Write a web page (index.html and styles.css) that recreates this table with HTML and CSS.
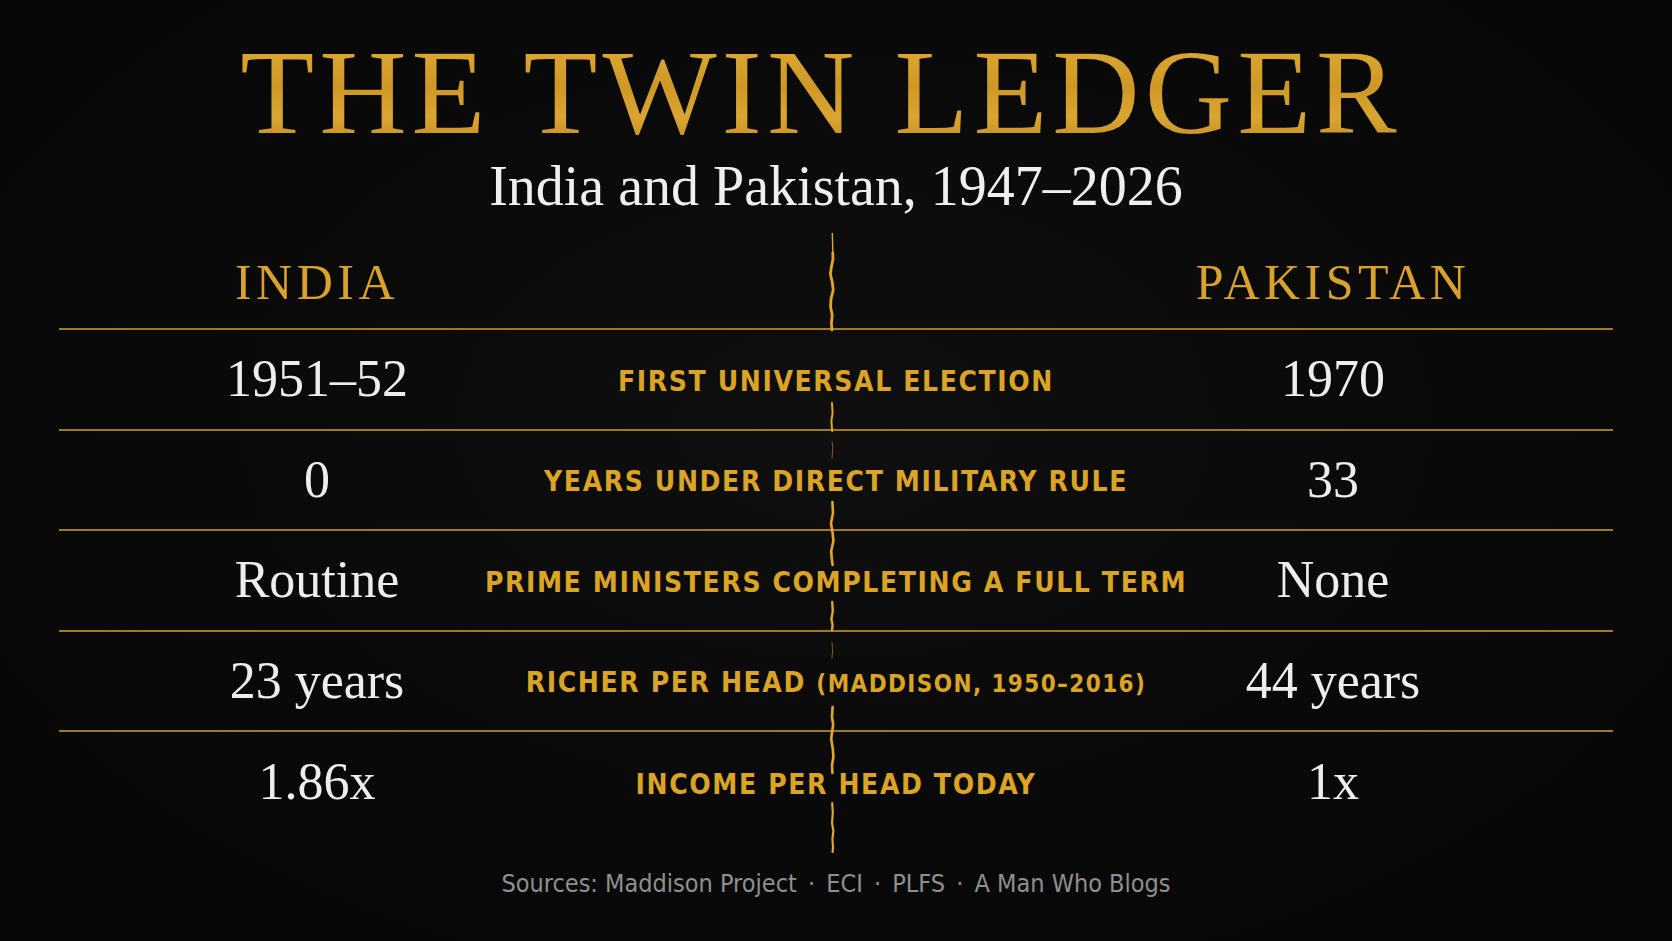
FILE: index.html
```html
<!DOCTYPE html>
<html lang="en">
<head>
<meta charset="utf-8">
<title>The Twin Ledger</title>
<link rel="stylesheet" href="styles.css">
</head>
<body>
<main class="poster">
  <h1 class="title">THE TWIN LEDGER</h1>
  <p class="subtitle">India and Pakistan, 1947–2026</p>
  <section class="ledger">
    <div class="row head">
      <div class="val left country">INDIA</div>
      <div class="label"></div>
      <div class="val right country">PAKISTAN</div>
    </div>
    <div class="row">
      <div class="val left">1951–52</div>
      <div class="label"><span>FIRST UNIVERSAL ELECTION</span></div>
      <div class="val right">1970</div>
    </div>
    <div class="row">
      <div class="val left">0</div>
      <div class="label"><span>YEARS UNDER DIRECT MILITARY RULE</span></div>
      <div class="val right">33</div>
    </div>
    <div class="row">
      <div class="val left">Routine</div>
      <div class="label"><span>PRIME MINISTERS COMPLETING A FULL TERM</span></div>
      <div class="val right">None</div>
    </div>
    <div class="row">
      <div class="val left">23 years</div>
      <div class="label"><span>RICHER PER HEAD <span class="small">(MADDISON, 1950–2016)</span></span></div>
      <div class="val right">44 years</div>
    </div>
    <div class="row last">
      <div class="val left">1.86x</div>
      <div class="label"><span>INCOME PER HEAD TODAY</span></div>
      <div class="val right">1x</div>
    </div>
    <svg class="crack" width="20" height="620" viewBox="0 0 20 620" aria-hidden="true">
      <g fill="none" stroke="#e3a626" stroke-linejoin="miter" stroke-linecap="round">
        <polyline stroke-width="1.4" points="10.3,0 10.6,10 10.8,20"/>
        <polyline stroke-width="2.8" points="10.8,20 11,26 9.4,34 8.4,41 10.4,50 11.2,57 9,66 8.6,74 10.2,82 9.4,90 10,97"/>
        <polyline stroke-width="2" points="10,170 10.6,180 9.4,188 10.2,198"/>
        <polyline stroke-width="1.1" stroke-opacity="0.5" points="10.2,209 10.8,216 10,225"/>
        <polyline stroke-width="2.6" points="10.4,269 11,280 9,290 10.6,300 11.4,308 9.2,318 9.8,326 10.6,332"/>
        <polyline stroke-width="2.4" points="10.2,369 10.8,378 9.4,386 10.6,392 10,397"/>
        <polyline stroke-width="1.1" stroke-opacity="0.5" points="10,410 10.6,417 10,425"/>
        <polyline stroke-width="2.6" points="10.6,474 10,484 11.2,492 10.2,498 9.2,506 10.8,516 11.4,524 10,532 10.4,540"/>
        <polyline stroke-width="2.2" points="10.2,570 10.8,580 10,590 11.4,598 10.4,606 11,614 10.6,619"/>
      </g>
    </svg>
  </section>
  <p class="sources">Sources: Maddison Project <span class="sep">·</span> ECI <span class="sep">·</span> PLFS <span class="sep">·</span> A Man Who Blogs</p>
</main>
</body>
</html>
```
FILE: styles.css
```css
html, body {
  margin: 0;
  padding: 0;
}

body {
  width: 1672px;
  height: 941px;
  overflow: hidden;
  background: radial-gradient(ellipse at 50% 45%, #0f0f0f 0%, #090909 55%, #060606 100%);
  font-family: "Liberation Serif", "DejaVu Serif", serif;
}

.poster {
  display: flex;
  flex-direction: column;
  align-items: center;
  padding-top: 32px;
}

.title {
  margin: 0 30px 0 0;
  font-family: "Liberation Serif", "DejaVu Serif", serif;
  font-weight: normal;
  font-size: 121px;
  line-height: 1;
  letter-spacing: 5px;
  color: #d6a02a;
  background: linear-gradient(180deg, #e2ad36 0%, #cf9826 45%, #dba531 70%, #b98620 100%);
  -webkit-background-clip: text;
  background-clip: text;
  -webkit-text-fill-color: transparent;
}

.subtitle {
  margin: 5px 0 0;
  font-size: 56px;
  line-height: 1;
  color: #efefef;
}

.ledger {
  position: relative;
  width: 1554px;
  margin-top: 19px;
}

.row {
  display: grid;
  grid-template-columns: 500px 554px 500px;
  align-items: center;
  box-sizing: border-box;
  height: 100.5px;
  border-bottom: 2px solid #a47822;
}

.row.head {
  height: 97px;
  padding-top: 3px;
}

.row.last {
  height: 100px;
  border-bottom: none;
}

.val {
  font-family: "Liberation Serif", "DejaVu Serif", serif;
  font-size: 52px;
  line-height: 1;
  color: #ededed;
  text-align: center;
  white-space: nowrap;
}

.val.left {
  padding-left: 16px;
}

.val.right {
  padding-right: 60px;
}

.country {
  font-size: 50px;
  letter-spacing: 4.5px;
  color: #d9a22b;
}

.label {
  display: flex;
  justify-content: center;
  padding-top: 4px;
  white-space: nowrap;
  font-family: "DejaVu Sans Condensed", "DejaVu Sans", sans-serif;
  font-weight: bold;
  font-size: 28px;
  letter-spacing: 1.6px;
  color: #dca424;
}

.label .small {
  font-size: 24px;
  letter-spacing: 1.4px;
}

.crack {
  position: absolute;
  top: 0;
  left: 763px;
  pointer-events: none;
}

.sources {
  margin: 39px 0 0;
  font-family: "DejaVu Sans Condensed", "DejaVu Sans", sans-serif;
  font-size: 25px;
  line-height: 1;
  color: #8f8f8f;
  white-space: nowrap;
}

.sources .sep {
  margin: 0 4px;
}
```
